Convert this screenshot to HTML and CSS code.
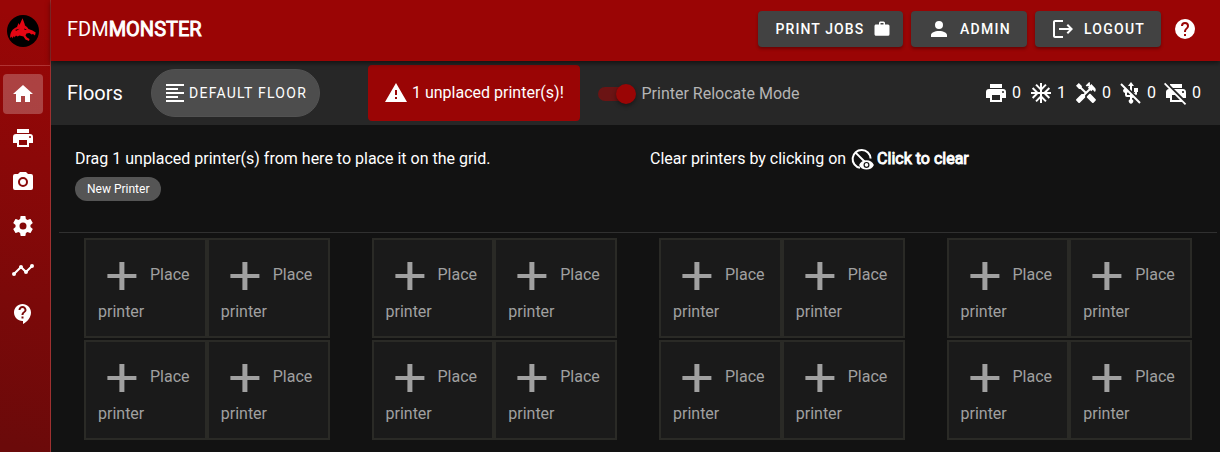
FILE: index.html
```html
<!DOCTYPE html>
<html lang="en">
<head>
<meta charset="utf-8">
<title>FDM Monster</title>
<link rel="stylesheet" href="styles.css">
</head>
<body>
<svg class="defs" width="0" height="0" aria-hidden="true">
  <symbol id="home" viewBox="0 0 24 24"><path d="M10,20V14H14V20H19V12H22L12,3L2,12H5V20H10Z"/></symbol>
  <symbol id="printer" viewBox="0 0 24 24"><path d="M18,3H6V7H18M19,12A1,1 0 0,1 18,11A1,1 0 0,1 19,10A1,1 0 0,1 20,11A1,1 0 0,1 19,12M16,19H8V14H16M19,8H5A3,3 0 0,0 2,11V17H6V21H18V17H22V11A3,3 0 0,0 19,8Z"/></symbol>
  <symbol id="camera" viewBox="0 0 24 24"><path d="M4,4H7L9,2H15L17,4H20A2,2 0 0,1 22,6V18A2,2 0 0,1 20,20H4A2,2 0 0,1 2,18V6A2,2 0 0,1 4,4M12,7A5,5 0 0,0 7,12A5,5 0 0,0 12,17A5,5 0 0,0 17,12A5,5 0 0,0 12,7M12,9A3,3 0 0,1 15,12A3,3 0 0,1 12,15A3,3 0 0,1 9,12A3,3 0 0,1 12,9Z"/></symbol>
  <symbol id="cog" viewBox="0 0 24 24"><path d="M12,15.5A3.5,3.5 0 0,1 8.5,12A3.5,3.5 0 0,1 12,8.5A3.5,3.5 0 0,1 15.5,12A3.5,3.5 0 0,1 12,15.5M19.43,12.97C19.47,12.65 19.5,12.33 19.5,12C19.5,11.67 19.47,11.34 19.43,11L21.54,9.37C21.73,9.22 21.78,8.95 21.66,8.73L19.66,5.27C19.54,5.05 19.27,4.96 19.05,5.05L16.56,6.05C16.04,5.66 15.5,5.32 14.87,5.07L14.5,2.42C14.46,2.18 14.25,2 14,2H10C9.75,2 9.54,2.18 9.5,2.42L9.13,5.07C8.5,5.32 7.96,5.66 7.44,6.05L4.95,5.05C4.73,4.96 4.46,5.05 4.34,5.27L2.34,8.73C2.21,8.95 2.27,9.22 2.46,9.37L4.57,11C4.53,11.34 4.5,11.67 4.5,12C4.5,12.33 4.53,12.65 4.57,12.97L2.46,14.63C2.27,14.78 2.21,15.05 2.34,15.27L4.34,18.73C4.46,18.95 4.73,19.03 4.95,18.95L7.44,17.94C7.96,18.34 8.5,18.68 9.13,18.93L9.5,21.58C9.54,21.82 9.75,22 10,22H14C14.25,22 14.46,21.82 14.5,21.58L14.87,18.93C15.5,18.67 16.04,18.34 16.56,17.94L19.05,18.95C19.27,19.03 19.54,18.95 19.66,18.73L21.66,15.27C21.78,15.05 21.73,14.78 21.54,14.63L19.43,12.97Z"/></symbol>
  <symbol id="timeline" viewBox="0 0 24 24"><path d="M3,14L3.5,14.07L8.07,9.5C7.89,8.85 8.06,8.11 8.59,7.59C9.37,6.8 10.63,6.8 11.41,7.59C11.94,8.11 12.11,8.85 11.93,9.5L14.5,12.07L15,12C15.18,12 15.35,12 15.5,12.07L19.07,8.5C19,8.35 19,8.18 19,8A2,2 0 0,1 21,6A2,2 0 0,1 23,8A2,2 0 0,1 21,10C20.82,10 20.65,10 20.5,9.93L16.93,13.5C17,13.65 17,13.82 17,14A2,2 0 0,1 15,16A2,2 0 0,1 13,14L13.07,13.5L10.5,10.93C10.18,11 9.82,11 9.5,10.93L4.93,15.5L5,16A2,2 0 0,1 3,18A2,2 0 0,1 1,16A2,2 0 0,1 3,14Z"/></symbol>
  <symbol id="support" viewBox="0 0 24 24"><path d="M11.5 2C6.81 2 3 5.81 3 10.5S6.81 19 11.5 19h.5v3c4.86-2.34 8-7 8-11.5C20 5.81 16.19 2 11.5 2zm1 14.5h-2v-2h2v2zm0-3.5h-2c0-3.25 3-3 3-5 0-1.1-.9-2-2-2s-2 .9-2 2h-2c0-2.21 1.79-4 4-4s4 1.79 4 4c0 2.5-3 2.75-3 5z"/></symbol>
  <symbol id="help" viewBox="0 0 24 24"><path d="M15.07,11.25L14.17,12.17C13.45,12.89 13,13.5 13,15H11V14.5C11,13.39 11.45,12.39 12.17,11.67L13.41,10.41C13.78,10.05 14,9.55 14,9C14,7.89 13.1,7 12,7A2,2 0 0,0 10,9H8A4,4 0 0,1 12,5A4,4 0 0,1 16,9C16,9.88 15.64,10.67 15.07,11.25M13,19H11V17H13M12,2A10,10 0 0,0 2,12A10,10 0 0,0 12,22A10,10 0 0,0 22,12C22,6.47 17.5,2 12,2Z"/></symbol>
  <symbol id="account" viewBox="0 0 24 24"><path d="M12,4A4,4 0 0,1 16,8A4,4 0 0,1 12,12A4,4 0 0,1 8,8A4,4 0 0,1 12,4M12,14C16.42,14 20,15.79 20,18V20H4V18C4,15.79 7.58,14 12,14Z"/></symbol>
  <symbol id="logout" viewBox="0 0 24 24"><path d="M17 7L15.59 8.41L18.17 11H8V13H18.17L15.59 15.58L17 17L22 12M4 5H12V3H4C2.9 3 2 3.9 2 5V19C2 20.1 2.9 21 4 21H12V19H4V5Z"/></symbol>
  <symbol id="work" viewBox="0 0 24 24"><path d="M10,2H14A2,2 0 0,1 16,4V6H20A2,2 0 0,1 22,8V19A2,2 0 0,1 20,21H4C2.89,21 2,20.1 2,19V8C2,6.89 2.89,6 4,6H8V4C8,2.89 8.89,2 10,2M14,6V4H10V6H14Z"/></symbol>
  <symbol id="align" viewBox="0 0 24 24"><path d="M3,3H21V5H3V3M3,7H15V9H3V7M3,11H21V13H3V11M3,15H15V17H3V15M3,19H21V21H3V19Z"/></symbol>
  <symbol id="alert" viewBox="0 0 24 24"><path d="M13 14H11V9H13M13 18H11V16H13M1 21H23L12 2L1 21Z"/></symbol>
  <symbol id="snow" viewBox="0 0 24 24"><path d="M22 11h-4.17l3.24-3.24-1.41-1.42L15 11h-2V9l4.66-4.66-1.42-1.41L13 6.17V2h-2v4.17L7.76 2.93 6.34 4.34 11 9v2H9L4.34 6.34 2.93 7.76 6.17 11H2v2h4.17l-3.24 3.24 1.41 1.42L9 13h2v2l-4.66 4.66 1.42 1.41L11 17.83V22h2v-4.17l3.24 3.24 1.42-1.41L13 15v-2h2l4.66 4.66 1.41-1.42L17.83 13H22z"/></symbol>
  <symbol id="tools" viewBox="0 0 24 24"><path d="M21.67 18.17l-5.3-5.3h-.99l-2.54 2.54v.99l5.3 5.3c.39.39 1.02.39 1.41 0l2.12-2.12c.39-.38.39-1.02 0-1.41z"/><path d="M17.34 10.19l1.41-1.41 2.12 2.12c1.17-1.17 1.17-3.07 0-4.24l-3.54-3.54-1.41 1.41V1.71l-.7-.71-3.54 3.54.71.71h2.83l-1.41 1.41 1.06 1.06-2.89 2.89-4.13-4.13V5.06L4.83 2.04 2 4.87l3.03 3.03h1.41l4.13 4.13-.85.85H7.6l-5.3 5.3c-.39.39-.39 1.02 0 1.41l2.12 2.12c.39.39 1.02.39 1.41 0l5.3-5.3v-2.12l5.15-5.15 1.02 1.05z"/></symbol>
  <symbol id="usb-off" viewBox="0 0 24 24"><path d="M15 7h4v4h-1v2.3l-1 .9-2.7-2.7L16 12v-1h-1V7zM9 5l3-4 3 4h-2v5.200l-2-2V5H9zM2.700 2.300L21.700 21.300 20.300 22.700 14.300 16.700 13 17v1.300a2.200 2.200 0 1 1-2 0V16H8a2 2 0 0 1-2-2v-2.100A2.200 2.200 0 0 1 5.300 7.700L1.300 3.700zM8 11.900V14h3v-.6L8.900 11.300z"/></symbol>
  <symbol id="printer-off" viewBox="0 0 24 24"><path d="M19.1 17H22v-6c0-1.7-1.3-3-3-3h-9l9.1 9zm-.1-7c.6 0 1 .4 1 1s-.4 1-1 1-1-.4-1-1 .4-1 1-1zm-1-3V3H6v1.1L9 7zM1.2 1.8L0 3l4.9 5C3.3 8.1 2 9.4 2 11v6h4v4h12l2.9 2.9 1.3-1.2-21-20.9zM8 19v-5h2.9l5 5H8z"/></symbol>
  <symbol id="plus" viewBox="0 0 24 24"><path d="M19.2,13H13.2V19H10.7V13H4.7V11H10.7V5H13.2V11H19.2V13Z"/></symbol>
  <symbol id="clear" viewBox="0 0 24 24"><path d="M20.6 11.5A9 9 0 1 0 10 20.8M5.6 5.6L14.5 14.5" fill="none" stroke="currentColor" stroke-width="2"/><path fill-rule="evenodd" d="M16.500 13.200c-3.400 0-6.200 1.900-7.400 4.700 1.200 2.800 4 4.700 7.400 4.700s6.200-1.900 7.400-4.700c-1.200-2.800-4-4.700-7.400-4.700zm0 7.700a3 3 0 1 1 0-6 3 3 0 0 1 0 6zm0-4.800a1.800 1.800 0 1 0 0 3.600 1.800 1.800 0 0 0 0-3.600z"/></symbol>
</svg>
<div class="app">
  <nav class="rail">
    <div class="rail-logo">
      <svg viewBox="0 0 32 32" width="32" height="32"><circle cx="16" cy="16" r="16"/><path class="dragon" d="M3.300 23C2.500 18 5.500 13.500 10 12L11.500 8 12.500 10 15.500 3.300 17.500 8.500 18 10.500 20 12 21.500 14 25.500 15.500 28.700 17.500 28 20.500 26 19 24.500 19.500 22.500 18 19.500 18.500 18.500 20.500 20 22.500 22.500 24 22 26 18.500 24.500 16.500 21.500 12.500 20.500 10.500 21.500 9 20.500 7.500 22.500 7 21 5 23.500 4.800 21.500z"/><path d="M17 13.500L20 14.800 17.800 15zM8 15L12.500 13.700 9.500 15.700z"/></svg>
    </div>
    <a class="rail-item active"><svg class="icon"><use href="#home"/></svg></a>
    <a class="rail-item"><svg class="icon"><use href="#printer"/></svg></a>
    <a class="rail-item"><svg class="icon"><use href="#camera"/></svg></a>
    <a class="rail-item"><svg class="icon"><use href="#cog"/></svg></a>
    <a class="rail-item"><svg class="icon"><use href="#timeline"/></svg></a>
    <a class="rail-item"><svg class="icon"><use href="#support"/></svg></a>
  </nav>
  <div class="page">
    <header class="topbar">
      <div class="brand">FDM<b>MONSTER</b></div>
      <button class="btn btn-jobs">PRINT JOBS<svg class="icon small"><use href="#work"/></svg></button>
      <button class="btn btn-admin"><svg class="icon"><use href="#account"/></svg>ADMIN</button>
      <button class="btn btn-logout"><svg class="icon"><use href="#logout"/></svg>LOGOUT</button>
      <svg class="icon help"><use href="#help"/></svg>
    </header>
    <div class="toolbar">
      <div class="title">Floors</div>
      <button class="floor"><svg class="icon"><use href="#align"/></svg>DEFAULT FLOOR</button>
      <div class="warning"><svg class="icon"><use href="#alert"/></svg>1 unplaced printer(s)!</div>
      <div class="switch"><span class="thumb"></span></div>
      <div class="switch-label">Printer Relocate Mode</div>
      <div class="stats">
        <span class="stat"><svg class="icon"><use href="#printer"/></svg>0</span>
        <span class="stat"><svg class="icon"><use href="#snow"/></svg>1</span>
        <span class="stat"><svg class="icon"><use href="#tools"/></svg>0</span>
        <span class="stat"><svg class="icon"><use href="#usb-off"/></svg>0</span>
        <span class="stat"><svg class="icon"><use href="#printer-off"/></svg>0</span>
      </div>
    </div>
    <main class="content">
      <section class="hints">
        <div class="hint"><div class="hint-line">Drag 1 unplaced printer(s) from here to place it on the grid.</div><span class="chip">New Printer</span></div>
        <div class="hint"><div class="hint-line">Clear printers by clicking on <svg class="icon"><use href="#clear"/></svg><b>Click to clear</b></div></div>
      </section>
      <section class="grid">
        <div class="group">
          <div class="tile"><div class="place"><svg class="plus"><use href="#plus"/></svg>Place</div><div>printer</div></div>
          <div class="tile"><div class="place"><svg class="plus"><use href="#plus"/></svg>Place</div><div>printer</div></div>
          <div class="tile"><div class="place"><svg class="plus"><use href="#plus"/></svg>Place</div><div>printer</div></div>
          <div class="tile"><div class="place"><svg class="plus"><use href="#plus"/></svg>Place</div><div>printer</div></div>
        </div>
        <div class="group">
          <div class="tile"><div class="place"><svg class="plus"><use href="#plus"/></svg>Place</div><div>printer</div></div>
          <div class="tile"><div class="place"><svg class="plus"><use href="#plus"/></svg>Place</div><div>printer</div></div>
          <div class="tile"><div class="place"><svg class="plus"><use href="#plus"/></svg>Place</div><div>printer</div></div>
          <div class="tile"><div class="place"><svg class="plus"><use href="#plus"/></svg>Place</div><div>printer</div></div>
        </div>
        <div class="group">
          <div class="tile"><div class="place"><svg class="plus"><use href="#plus"/></svg>Place</div><div>printer</div></div>
          <div class="tile"><div class="place"><svg class="plus"><use href="#plus"/></svg>Place</div><div>printer</div></div>
          <div class="tile"><div class="place"><svg class="plus"><use href="#plus"/></svg>Place</div><div>printer</div></div>
          <div class="tile"><div class="place"><svg class="plus"><use href="#plus"/></svg>Place</div><div>printer</div></div>
        </div>
        <div class="group">
          <div class="tile"><div class="place"><svg class="plus"><use href="#plus"/></svg>Place</div><div>printer</div></div>
          <div class="tile"><div class="place"><svg class="plus"><use href="#plus"/></svg>Place</div><div>printer</div></div>
          <div class="tile"><div class="place"><svg class="plus"><use href="#plus"/></svg>Place</div><div>printer</div></div>
          <div class="tile"><div class="place"><svg class="plus"><use href="#plus"/></svg>Place</div><div>printer</div></div>
        </div>
      </section>
    </main>
  </div>
</div>
</body>
</html>
```

FILE: styles.css
```css
* { box-sizing: border-box; }
body { margin: 0; background: #121212; color: #fff; font: 16px/24px Roboto, sans-serif; overflow: hidden; }
button { font: inherit; color: inherit; border: 0; margin: 0; padding: 0; }
svg { flex: none; }
.defs { display: none; }
.icon { width: 24px; height: 24px; fill: currentColor; }
.icon.small { width: 18px; height: 18px; }

.app { display: flex; width: 1220px; height: 452px; }
.rail { flex: none; width: 51px; border-right: 1px solid #9e3030; background: linear-gradient(195deg, #990606 5%, #8b0808 35%, #6b0a0a 98%); }
.rail-logo { height: 66px; padding: 15px 0 0 7px; margin-bottom: 8px; border-bottom: 1px solid #b03333; }
.dragon { fill: #e30613; }
.rail-item { display: flex; align-items: center; justify-content: center; width: 40px; height: 40px; margin: 0 0 4px 3px; border-radius: 4px; }
.rail-item.active { background: rgba(255, 255, 255, .24); }

.page { flex: 1; min-width: 0; }
.topbar { position: relative; display: flex; align-items: center; height: 61px; padding: 0 23px 3px 16px; background: #9a0505; box-shadow: 0 2px 5px rgba(0, 0, 0, .55); }
.brand { margin-right: auto; font-size: 20px; }
b { font-weight: 400; -webkit-text-stroke: .9px currentColor; }
.btn { display: flex; align-items: center; height: 36px; border-radius: 4px; background: #424242; font-size: 14px; font-weight: 500; letter-spacing: 1.25px; box-shadow: 0 2px 3px rgba(0, 0, 0, .3); margin-right: 8px; }
.btn-jobs { width: 145px; padding-left: 17.5px; gap: 9px; letter-spacing: 1.1px; }
.btn-admin { width: 116px; padding-left: 16px; gap: 9px; }
.btn-logout { width: 126px; padding-left: 16px; gap: 9px; }
.help { margin-left: 4px; }

.toolbar { display: flex; align-items: center; height: 64px; padding: 0 19px 0 16px; background: #272727; }
.title { width: 84px; font-size: 20px; }
.floor { display: flex; align-items: center; width: 169px; height: 48px; padding-left: 11px; gap: 2px; border-radius: 24px; background: #4d4d4d; border: 1px solid #525252; font-size: 14px; letter-spacing: 1.25px; margin-right: 48px; }
.warning { display: flex; align-items: center; width: 212px; height: 56px; padding-left: 16px; gap: 4px; border-radius: 4px; background: #9a0505; margin-right: 18px; }
.switch { display: flex; align-items: center; justify-content: flex-end; width: 36px; height: 14px; margin-top: 2px; border-radius: 7px; background: #6b1414; }
.thumb { flex: none; width: 20px; height: 20px; margin-right: -2px; border-radius: 50%; background: #9a0505; box-shadow: 0 2px 4px rgba(0, 0, 0, .4); }
.switch-label { margin: 2px 0 0 7.5px; color: #b5b5b5; }
.stats { display: flex; gap: 8px; margin-left: auto; }
.stat { display: flex; align-items: center; gap: 4px; }

.content { padding: 0 3px 0 8px; }
.hints { display: flex; height: 108px; padding: 20px 0 0 16px; border-bottom: 1px solid #303030; }
.hint { flex: none; width: 575px; }
.hint-line { display: flex; align-items: center; height: 28px; white-space: pre; }
.hint-line b { padding-left: 3px; }
.chip { display: inline-flex; align-items: center; height: 24px; margin-top: 4px; padding: 0 12px; border-radius: 12px; background: #555; font-size: 12px; }
.grid { display: grid; grid-template-columns: repeat(4, 287.5px); justify-items: center; padding: 5px 0 0 4px; }
.group { display: grid; grid-template-columns: 122.75px 122.75px; gap: 2px 0; width: 245.5px; }
.tile { height: 100px; padding: 12px 0 0 12px; border: 2px solid #2a2a26; background: #1a1a1a; color: #a0a0a0; }
.place { display: flex; height: 48px; gap: 4px; line-height: 45px; }
.plus { width: 48px; height: 48px; fill: currentColor; }
```
